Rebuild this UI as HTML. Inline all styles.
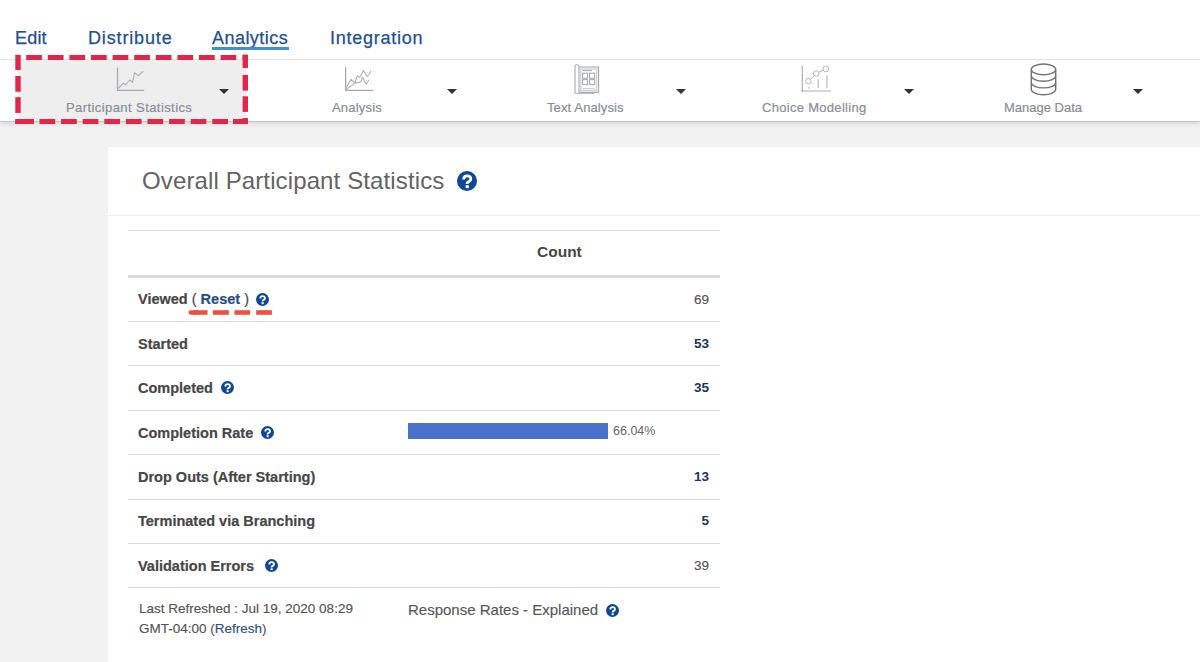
<!DOCTYPE html>
<html><head><meta charset="utf-8">
<style>
*{box-sizing:border-box;margin:0;padding:0}
html,body{width:1200px;height:662px;overflow:hidden;background:#f2f2f2;font-family:"Liberation Sans",sans-serif}
.abs{position:absolute;white-space:nowrap}
#nav{position:absolute;left:0;top:0;width:1200px;height:60px;background:#fff;border-bottom:1px solid #e2e2e2}
.navi{position:absolute;top:27px;font-size:18px;line-height:22px;color:#22508f;-webkit-text-stroke:0.25px #22508f}
#ul{position:absolute;left:212px;top:47px;width:77px;height:3px;background:#3b93d6}
#tb{position:absolute;left:0;top:60px;width:1200px;height:61px;background:#fff;box-shadow:0 1px 1px rgba(0,0,0,.1),0 3px 5px rgba(0,0,0,.1)}
#sel{position:absolute;left:18px;top:60px;width:228px;height:61px;background:#eeeeef}
.lbl{position:absolute;top:100px;font-size:13px;line-height:16px;color:#8a8e96;-webkit-text-stroke:0.2px #8a8e96}
.arr{position:absolute;top:89px;width:0;height:0;border-left:5px solid transparent;border-right:5px solid transparent;border-top:5px solid #333}
#card{position:absolute;left:108px;top:147px;width:1092px;height:515px;background:#fff}
#hdrline{position:absolute;left:108px;top:215px;width:1092px;height:1px;background:#ececec}
#title{position:absolute;left:142px;top:167px;font-size:24px;line-height:28px;color:#636363;letter-spacing:0.12px}
.hl{position:absolute;left:128px;width:592px;height:1px;background:#dcdcdc}
.rl{position:absolute;left:138px;font-size:14.5px;line-height:18px;font-weight:bold;color:#474747;-webkit-text-stroke:0.2px #474747}
.val{position:absolute;right:491px;font-size:13.5px;line-height:18px;color:#555;text-align:right;-webkit-text-stroke:0.15px #555}
.val.b{font-weight:bold;color:#1a3562;-webkit-text-stroke:0}
.q{position:absolute;border-radius:50%;background:#134a9c;color:#fff;font-weight:bold;text-align:center}
</style></head><body>
<div id="nav"></div>
<div class="navi abs" style="left:15px;letter-spacing:0.2px">Edit</div>
<div class="navi abs" style="left:88px;letter-spacing:0.85px">Distribute</div>
<div class="navi abs" style="left:212px;letter-spacing:0.45px">Analytics</div>
<div class="navi abs" style="left:330px;letter-spacing:0.75px">Integration</div>
<div id="ul"></div>

<div id="tb"></div>
<div id="sel"></div>

<!-- icons -->
<svg class="abs" style="left:0;top:0" width="1200" height="121" viewBox="0 0 1200 121">
 <g fill="none" stroke="#a8aaae" stroke-width="1.3" stroke-linecap="butt">
  <path d="M117.5 67.8V90.3H144.2"/>
  <path d="M345.6 67.3V90.3H373.2"/>
 </g>
 <g fill="none" stroke="#afb1b5" stroke-width="1.1" stroke-linejoin="round" stroke-linecap="round">
  <path d="M118 88.5L123.5 83.2L125.6 84.7L129.8 80L132.5 82.3L134.6 72.6L138.3 75.7L143 71.5"/>
  <path d="M346 88L351 79.4L355 83L357.2 75.7L359.8 77.3L363.5 70.5L367.2 76.8L371 71"/>
  <path d="M346 89.5L355 83.1L360.9 82L362.5 77.3L366.2 84.2L368.8 80"/>
 </g>
 <g fill="none" stroke="#a9abb0" stroke-width="1.1">
  <path d="M579 66.8a2 2 0 0 0-4 0V93.3H594.5"/>
  <rect x="579" y="67" width="19.6" height="25.4"/>
  <rect x="580.8" y="69" width="16" height="21.8" stroke="#c4c6ca"/>
  <path d="M582.5 70.6H592"/>
  <rect x="582.6" y="73.2" width="5" height="5"/>
  <rect x="589.6" y="73.2" width="5" height="5"/>
  <rect x="582.6" y="79.6" width="5" height="5"/>
  <rect x="589.6" y="79.6" width="5" height="5"/>
  <path d="M582.5 88.8H595" stroke="#c4c6ca"/>
 </g>
 <g fill="none" stroke="#aeb0b4" stroke-width="1.2">
  <path d="M802.3 66V92M801 91H831"/>
 </g>
 <g fill="none" stroke="#b6b8bc" stroke-width="1">
  <circle cx="808.4" cy="81.2" r="2.8"/>
  <circle cx="816.2" cy="73.6" r="2.8"/>
  <circle cx="825.7" cy="69" r="2.8"/>
  <path d="M810.4 79.2L814.2 75.6M818.6 72.4L823.2 70.2"/>
  <path d="M818.2 79V88M827 75.6V88M809 86.8V88.4" stroke-width="1.2"/>
 </g>
 <g fill="none" stroke="#707276" stroke-width="1.4">
  <ellipse cx="1043.5" cy="69.4" rx="12.2" ry="5.4"/>
  <path d="M1031.3 69.4V89.3a12.2 5.4 0 0 0 24.4 0V69.4"/>
  <path d="M1031.3 75.8a12.2 5.4 0 0 0 24.4 0"/>
  <path d="M1031.3 82.5a12.2 5.4 0 0 0 24.4 0"/>
 </g>
</svg>

<div class="lbl abs" style="left:66px;letter-spacing:0.42px">Participant Statistics</div>
<div class="lbl abs" style="left:332px;letter-spacing:0.19px">Analysis</div>
<div class="lbl abs" style="left:547px;letter-spacing:0.12px">Text Analysis</div>
<div class="lbl abs" style="left:762px;letter-spacing:0.3px">Choice Modelling</div>
<div class="lbl abs" style="left:1004px">Manage Data</div>
<div class="arr" style="left:219px"></div>
<div class="arr" style="left:447px"></div>
<div class="arr" style="left:676px"></div>
<div class="arr" style="left:904px"></div>
<div class="arr" style="left:1133px"></div>

<!-- annotation dashed box -->
<svg class="abs" style="left:0;top:0" width="1200" height="140"><g fill="#e2264b"><rect x="26.2" y="55.0" width="15.7" height="5.0"/><rect x="47.8" y="55.0" width="15.7" height="5.0"/><rect x="69.4" y="55.0" width="15.7" height="5.0"/><rect x="91.0" y="55.0" width="15.7" height="5.0"/><rect x="112.6" y="55.0" width="15.7" height="5.0"/><rect x="134.2" y="55.0" width="15.7" height="5.0"/><rect x="155.8" y="55.0" width="15.7" height="5.0"/><rect x="177.4" y="55.0" width="15.7" height="5.0"/><rect x="199.0" y="55.0" width="15.7" height="5.0"/><rect x="220.6" y="55.0" width="15.7" height="5.0"/><rect x="15.3" y="54.8" width="5.4" height="15.2"/><rect x="15.3" y="76.0" width="5.4" height="15.7"/><rect x="15.3" y="97.2" width="5.4" height="15.7"/><rect x="15.3" y="119.0" width="5.4" height="5.0"/><rect x="242.6" y="54.8" width="5.4" height="13.2"/><rect x="242.6" y="75.0" width="5.4" height="15.6"/><rect x="242.6" y="96.3" width="5.4" height="15.6"/><rect x="242.6" y="118.0" width="5.4" height="6.0"/><rect x="15.3" y="119.0" width="18.7" height="5.0"/><rect x="39.5" y="119.0" width="15.7" height="5.0"/><rect x="61.1" y="119.0" width="15.7" height="5.0"/><rect x="82.7" y="119.0" width="15.7" height="5.0"/><rect x="104.3" y="119.0" width="15.7" height="5.0"/><rect x="125.9" y="119.0" width="15.7" height="5.0"/><rect x="147.5" y="119.0" width="15.7" height="5.0"/><rect x="169.1" y="119.0" width="15.7" height="5.0"/><rect x="190.7" y="119.0" width="15.7" height="5.0"/><rect x="212.3" y="119.0" width="15.7" height="5.0"/><rect x="233.0" y="119.0" width="15.0" height="5.0"/><rect x="242.6" y="54.8" width="5.4" height="5.2"/></g></svg>

<div id="card"></div>
<div id="hdrline"></div>
<div id="title" class="abs">Overall Participant Statistics</div>
<svg class="abs" style="left:457px;top:170.5px" width="20" height="20" viewBox="0 0 20 20"><circle cx="10" cy="10" r="10" fill="#0e4795"/><path d="M6.7 8.4C6.7 6.1 8.1 4.8 10.1 4.8C12.3 4.8 13.8 6.1 13.8 7.9C13.8 10.1 11.8 10.3 10.4 11.6C10.1 11.9 10.2 12.5 10.2 13" fill="none" stroke="#fff" stroke-width="2.8"/><rect x="8.6" y="14.2" width="3.2" height="3" fill="#fff"/></svg>

<div class="hl" style="top:230px"></div>
<div class="abs" style="left:537px;top:243px;font-size:15.5px;line-height:18px;font-weight:bold;color:#474747">Count</div>
<div class="hl" style="top:275px;height:3px"></div>
<div class="hl" style="top:321px"></div>
<div class="hl" style="top:365px"></div>
<div class="hl" style="top:410px"></div>
<div class="hl" style="top:454px"></div>
<div class="hl" style="top:499px"></div>
<div class="hl" style="top:543px"></div>
<div class="hl" style="top:587px"></div>

<div class="rl abs" style="top:290px">Viewed <span style="font-weight:normal;color:#4a4a4a">(</span> <span style="color:#1f4f96">Reset</span> <span style="font-weight:normal;color:#4a4a4a">)</span></div>
<svg class="abs" style="left:256px;top:293px" width="13" height="13" viewBox="0 0 20 20"><circle cx="10" cy="10" r="10" fill="#0e4795"/><path d="M6.7 8.4C6.7 6.1 8.1 4.8 10.1 4.8C12.3 4.8 13.8 6.1 13.8 7.9C13.8 10.1 11.8 10.3 10.4 11.6C10.1 11.9 10.2 12.5 10.2 13" fill="none" stroke="#fff" stroke-width="2.8"/><rect x="8.6" y="14.2" width="3.2" height="3" fill="#fff"/></svg>
<svg class="abs" style="left:180px;top:305px" width="100" height="15"><g fill="#ef5141"><rect x="8.6" y="5.2" width="10" height="4.6" rx="2.2"/><rect x="13" y="5.2" width="14.5" height="4.6"/><rect x="33" y="5.2" width="15.8" height="4.6"/><rect x="54.4" y="5.2" width="15.6" height="4.6"/><rect x="76.2" y="5.2" width="15.7" height="4.6"/></g></svg>

<div class="rl abs" style="top:335px">Started</div>
<div class="rl abs" style="top:379px">Completed</div>
<svg class="abs" style="left:221px;top:381px" width="13" height="13" viewBox="0 0 20 20"><circle cx="10" cy="10" r="10" fill="#0e4795"/><path d="M6.7 8.4C6.7 6.1 8.1 4.8 10.1 4.8C12.3 4.8 13.8 6.1 13.8 7.9C13.8 10.1 11.8 10.3 10.4 11.6C10.1 11.9 10.2 12.5 10.2 13" fill="none" stroke="#fff" stroke-width="2.8"/><rect x="8.6" y="14.2" width="3.2" height="3" fill="#fff"/></svg>
<div class="rl abs" style="top:424px">Completion Rate</div>
<svg class="abs" style="left:261px;top:426px" width="13" height="13" viewBox="0 0 20 20"><circle cx="10" cy="10" r="10" fill="#0e4795"/><path d="M6.7 8.4C6.7 6.1 8.1 4.8 10.1 4.8C12.3 4.8 13.8 6.1 13.8 7.9C13.8 10.1 11.8 10.3 10.4 11.6C10.1 11.9 10.2 12.5 10.2 13" fill="none" stroke="#fff" stroke-width="2.8"/><rect x="8.6" y="14.2" width="3.2" height="3" fill="#fff"/></svg>
<div class="rl abs" style="top:468px">Drop Outs (After Starting)</div>
<div class="rl abs" style="top:512px">Terminated via Branching</div>
<div class="rl abs" style="top:557px">Validation Errors</div>
<svg class="abs" style="left:265px;top:559px" width="13" height="13" viewBox="0 0 20 20"><circle cx="10" cy="10" r="10" fill="#0e4795"/><path d="M6.7 8.4C6.7 6.1 8.1 4.8 10.1 4.8C12.3 4.8 13.8 6.1 13.8 7.9C13.8 10.1 11.8 10.3 10.4 11.6C10.1 11.9 10.2 12.5 10.2 13" fill="none" stroke="#fff" stroke-width="2.8"/><rect x="8.6" y="14.2" width="3.2" height="3" fill="#fff"/></svg>

<div class="val abs" style="top:291px">69</div>
<div class="val b abs" style="top:335px">53</div>
<div class="val b abs" style="top:379px">35</div>
<div class="abs" style="left:408px;top:423px;width:200px;height:16px;background:#4a72cc"></div>
<div class="abs" style="left:613px;top:423px;font-size:12.5px;line-height:16px;color:#666">66.04%</div>
<div class="val b abs" style="top:468px">13</div>
<div class="val b abs" style="top:512px">5</div>
<div class="val abs" style="top:557px">39</div>

<div class="abs" style="left:139px;top:599px;font-size:13.5px;line-height:20px;color:#555;-webkit-text-stroke:0.15px #555">Last Refreshed : Jul 19, 2020 08:29<br>GMT-04:00 (<span style="color:#1f4f96">Refresh</span>)</div>
<div class="abs" style="left:408px;top:601px;font-size:15px;line-height:18px;color:#575757;-webkit-text-stroke:0.15px #575757">Response Rates - Explained</div>
<svg class="abs" style="left:606px;top:604px" width="13" height="13" viewBox="0 0 20 20"><circle cx="10" cy="10" r="10" fill="#0e4795"/><path d="M6.7 8.4C6.7 6.1 8.1 4.8 10.1 4.8C12.3 4.8 13.8 6.1 13.8 7.9C13.8 10.1 11.8 10.3 10.4 11.6C10.1 11.9 10.2 12.5 10.2 13" fill="none" stroke="#fff" stroke-width="2.8"/><rect x="8.6" y="14.2" width="3.2" height="3" fill="#fff"/></svg>
</body></html>
